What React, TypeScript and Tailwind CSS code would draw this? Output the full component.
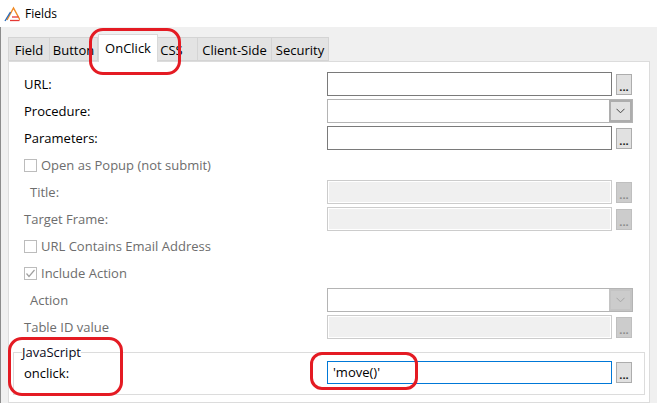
import React from "react";

const FONT = { fontFamily: '"Open Sans", "Noto Sans", sans-serif' };

function Dots({ disabled }: { disabled?: boolean }) {
  return (
    <div
      className={`ml-[4px] w-[16px] h-[21px] border flex items-end justify-center pb-[3px] ${
        disabled ? "bg-[#cccccc] border-[#bfbfbf] text-[#8a8a8a]" : "bg-[#e1e1e1] border-[#adadad] text-[#1a1a1a]"
      }`}
    >
      <span className="text-[11px] font-bold leading-[8px] tracking-[0px]">...</span>
    </div>
  );
}

function TextBox({ disabled, value, focused }: { disabled?: boolean; value?: string; focused?: boolean }) {
  const cls = disabled
    ? "bg-[#f0f0f0] border-[#cccccc] shadow-[inset_0_0_0_1px_#ffffff]"
    : focused
    ? "bg-white border-[#0078d7]"
    : "bg-white border-[#7a7a7a]";
  return (
    <div className={`w-[285px] h-full border flex items-center pl-[5px] pt-px text-black ${cls}`}>{value}</div>
  );
}

function Select({ disabled }: { disabled?: boolean }) {
  return (
    <div className="w-[306px] h-full border border-[#b4b4b4] bg-white flex justify-end">
      <div
        className={`w-[23px] h-full border-2 flex items-center justify-center ${
          disabled ? "bg-[#cccccc] border-[#c4c4c4]" : "bg-[#e1e1e1] border-[#adadad]"
        }`}
      >
        <svg width="9" height="6" viewBox="0 0 9 6">
          <polyline points="0.5,0.8 4.5,4.8 8.5,0.8" fill="none" stroke={disabled ? "#a6a6a6" : "#444"} strokeWidth="1" />
        </svg>
      </div>
    </div>
  );
}

function Row({ label, indent, disabled, children }: { label: string; indent?: boolean; disabled?: boolean; children?: React.ReactNode }) {
  return (
    <div className="h-[24px] flex items-center">
      <div className={`w-[318px] pt-[2px] ${indent ? "pl-[21px]" : "pl-[15px]"} ${disabled ? "text-[#6d6d6d]" : "text-black"}`}>{label}</div>
      {children}
    </div>
  );
}

function CheckRow({ label, checked }: { label: string; checked?: boolean }) {
  return (
    <div className="h-[24px] flex items-center pl-[15px] text-[#6d6d6d]">
      <div className="w-[13px] h-[13px] border border-[#bcbcbc] bg-white flex items-center justify-center">
        {checked && (
          <svg width="11" height="11" viewBox="0 0 11 11">
            <polyline points="1.5,5.5 4,8.5 9.5,2" fill="none" stroke="#a0a0a0" strokeWidth="1.2" />
          </svg>
        )}
      </div>
      <span className="ml-[4px] pt-px">{label}</span>
    </div>
  );
}

const tabs = [
  { name: "Field", w: "w-[42px]" },
  { name: "Button", w: "w-[48px]" },
  { name: "OnClick", w: "w-[60px]", active: true },
  { name: "CSS", w: "w-[40px] pr-[12px]" },
  { name: "Client-Side", w: "w-[74px]" },
  { name: "Security", w: "w-[57px]" },
];

export default function App() {
  return (
    <div className="relative w-[657px] h-[403px] overflow-hidden bg-[#f0f0f0] flex flex-col text-[13px]" style={FONT}>
      {/* title bar */}
      <div className="h-[27px] bg-white flex items-center pl-[4px] shrink-0">
        <svg width="16" height="17" viewBox="0 0 16 17">
          <polyline points="3,15 9.5,3 16,15" fill="none" stroke="#f08a24" strokeWidth="1.4" />
          <line x1="1" y1="16" x2="6.5" y2="7" stroke="#2a6ab8" strokeWidth="1.4" />
          <line x1="8" y1="12" x2="14.5" y2="12" stroke="#e53935" strokeWidth="1.3" />
          <line x1="6" y1="15.5" x2="15.5" y2="15.5" stroke="#e53935" strokeWidth="1.3" />
        </svg>
        <span className="ml-[5px] text-[12px] text-black">Fields</span>
      </div>

      <div className="flex-1 flex flex-col border-l border-[#8c8c8c] pl-[7px]">
        {/* tabs */}
        <div className="h-[34px] flex items-end shrink-0 text-[13px]">
          {tabs.map((t) =>
            t.active ? (
              <div
                key={t.name}
                className={`${t.w} h-[28px] -mb-px relative z-10 bg-white border border-b-0 border-[#d9d9d9] flex items-start justify-center pt-[4px] text-black`}
              >
                {t.name}
              </div>
            ) : (
              <div
                key={t.name}
                className={`${t.w} h-[24px] bg-[#e3e3e3] border border-l-0 first:border-l border-[#d4d4d4] flex items-center justify-center pt-[4px] text-black`}
              >
                {t.name}
              </div>
            )
          )}
        </div>

        {/* panel */}
        <div className="w-[642px] flex-1 bg-white border border-[#dcdcdc] pt-[10px] flex flex-col">
          <div className="flex flex-col gap-[3px]">
            <Row label="URL:">
              <TextBox />
              <Dots />
            </Row>
            <Row label="Procedure:">
              <Select />
            </Row>
            <Row label="Parameters:">
              <TextBox />
              <Dots />
            </Row>
            <CheckRow label="Open as Popup (not submit)" />
            <Row label="Title:" indent disabled>
              <TextBox disabled />
              <Dots disabled />
            </Row>
            <Row label="Target Frame:" disabled>
              <TextBox disabled />
              <Dots disabled />
            </Row>
            <CheckRow label="URL Contains Email Address" />
            <CheckRow label="Include Action" checked />
            <Row label="Action" indent disabled>
              <Select disabled />
            </Row>
            <Row label="Table ID value" disabled>
              <TextBox disabled />
              <Dots disabled />
            </Row>
          </div>

          <fieldset className="mt-[5px] mx-[4px] border border-[#dcdcdc] pb-[10px]">
            <legend className="ml-[8px] leading-[16px] text-[#0a0a1a]">JavaScript</legend>
            <div className="mt-px h-[23px] flex items-center">
              <div className="w-[313px] pl-[10px] pt-[2px] text-black">onclick:</div>
              <TextBox focused value="'move()'" />
              <Dots />
            </div>
          </fieldset>
        </div>
      </div>

      {/* red annotations */}
      <div className="absolute left-[89px] top-[28px] w-[92px] h-[47px] border-[3px] border-[#e41b23] rounded-[14px]" />
      <div className="absolute left-[8px] top-[337px] w-[115px] h-[59px] border-[3px] border-[#e41b23] rounded-[14px]" />
      <div className="absolute left-[310px] top-[352px] w-[108px] h-[38px] border-[3px] border-[#e41b23] rounded-[12px]" />
    </div>
  );
}
